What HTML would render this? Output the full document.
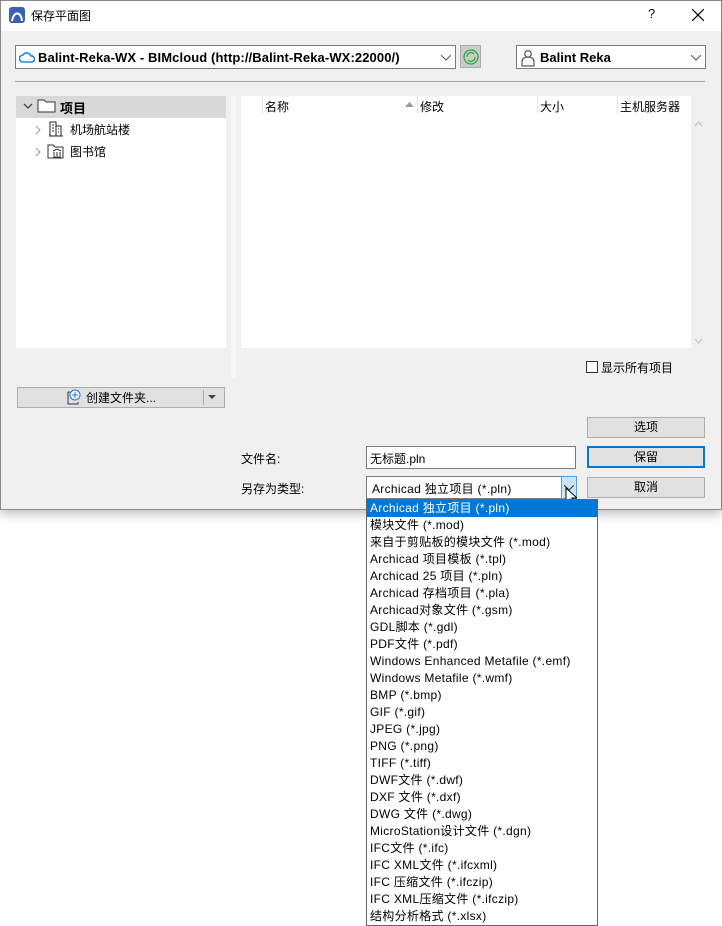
<!DOCTYPE html>
<html><head><meta charset="utf-8"><style>
*{box-sizing:border-box;margin:0;padding:0}
body{width:722px;height:926px;background:#fff;position:relative;overflow:hidden;font-family:"Liberation Sans","Microsoft YaHei","Noto Sans CJK SC",sans-serif;font-size:12px;color:#000}
.a{position:absolute}
#win{left:0;top:0;width:722px;height:510px;background:#f0f0f0;outline:1px solid #888;outline-offset:-1px;box-shadow:0 4px 10px rgba(0,0,0,.25)}
#title{left:1px;top:1px;width:720px;height:30px;background:#fff}
.btn{background:#e1e1e1;border:1px solid #adadad;text-align:center;line-height:18px;font-size:12px}
.combo{background:#fff;border:1px solid #7a7a7a}
#list{left:366px;top:499px;width:232px;height:427px;background:#fff;border:1px solid #646464}
#list div{height:17px;line-height:17px;padding-left:3px;font-size:12px;white-space:nowrap;letter-spacing:0.3px}
#list .s{background:#0078d7;color:#fff}
</style></head><body>
<div id="win" class="a">
<div id="title" class="a">
<svg class="a" style="left:8px;top:6px" width="16" height="16"><rect width="16" height="16" rx="3" fill="#3a62b0"/><path d="M3 14 C4 5 12 3 13 14" stroke="#fff" stroke-width="2" fill="none"/></svg>
<div class="a" style="left:30px;top:6px;font-size:12px">保存平面图</div>
<div class="a" style="left:647px;top:5px;font-size:13px">?</div>
<svg class="a" style="left:691px;top:8px" width="12" height="12"><path d="M0 0L12 12M12 0L0 12" stroke="#000" stroke-width="1.2"/></svg>
</div>
<div class="a combo" style="left:15px;top:45px;width:441px;height:24px">
<svg class="a" style="left:3px;top:4px" width="16" height="14"><path d="M4 12 H13 A3 3 0 0 0 12 6 A4.5 4.5 0 0 0 4 5 A3.5 3.5 0 0 0 4 12Z" fill="none" stroke="#1e88e5" stroke-width="1.6"/></svg>
<div class="a" style="left:22px;top:4px;font-weight:bold;font-size:13px;letter-spacing:0.1px">Balint-Reka-WX - BIMcloud (http://Balint-Reka-WX:22000/)</div>
<svg class="a" style="left:425px;top:9px" width="10" height="6"><path d="M0 0L5 5L10 0" stroke="#555" fill="none"/></svg>
</div>
<div class="a" style="left:460px;top:45px;width:21px;height:23px;background:#ccc;border:1px solid #aaa"><svg class="a" style="left:2px;top:3px" width="16" height="16"><circle cx="8" cy="8" r="7" fill="none" stroke="#2eaa3c" stroke-width="1.3"/><path d="M4 8A4 4 0 0 1 11 5M12 8A4 4 0 0 1 5 11" stroke="#2eaa3c" fill="none" stroke-width="1.3"/></svg></div>
<div class="a combo" style="left:516px;top:45px;width:190px;height:24px">
<svg class="a" style="left:4px;top:3px" width="14" height="18"><circle cx="7" cy="5" r="3.3" fill="none" stroke="#333"/><path d="M1 17V12A6 4 0 0 1 13 12V17Z" fill="none" stroke="#333"/></svg>
<div class="a" style="left:23px;top:4px;font-weight:bold;font-size:13px">Balint Reka</div>
<svg class="a" style="left:174px;top:9px" width="10" height="6"><path d="M0 0L5 5L10 0" stroke="#555" fill="none"/></svg>
</div>
<div class="a" style="left:15px;top:81px;width:690px;height:1px;background:#a0a0a0"></div>
<div class="a" style="left:16px;top:96px;width:210px;height:252px;background:#fff"></div>
<div class="a" style="left:16px;top:96px;width:210px;height:22px;background:#d9d9d9"></div>
<svg class="a" style="left:23px;top:103px" width="10" height="7"><path d="M1 1L5 5L9 1" stroke="#444" fill="none" stroke-width="1.3"/></svg>
<svg class="a" style="left:37px;top:98px" width="20" height="16"><path d="M1 2H7L9 4H18V14H1Z" fill="#fff" stroke="#333"/></svg>
<div class="a" style="left:60px;top:98px;font-size:13px;font-weight:bold">项目</div>
<svg class="a" style="left:35px;top:125px" width="6" height="10"><path d="M1 1L5 5L1 9" stroke="#999" fill="none"/></svg>
<svg class="a" style="left:48px;top:121px" width="16" height="16"><path d="M2 15V1H8V15M8 5H13V15M1 15H15M4 4H6M4 7H6M4 10H6M10 8H11M10 11H11" stroke="#222" fill="none"/></svg>
<div class="a" style="left:70px;top:121px">机场航站楼</div>
<svg class="a" style="left:35px;top:147px" width="6" height="10"><path d="M1 1L5 5L1 9" stroke="#999" fill="none"/></svg>
<svg class="a" style="left:47px;top:143px" width="18" height="16"><path d="M1 2H6L8 4H16V15H1Z" fill="#fff" stroke="#333"/><path d="M6 8L10 6L14 8M7 9V13M10 9V13M13 9V13M6 14H14" stroke="#333" fill="none"/></svg>
<div class="a" style="left:70px;top:143px">图书馆</div>
<div class="a" style="left:231px;top:96px;width:5px;height:282px;background:#f7f7f7"></div>
<div class="a" style="left:241px;top:96px;width:450px;height:252px;background:#fff"></div>
<div class="a" style="left:262px;top:96px;width:1px;height:18px;background:#e5e5e5"></div>
<div class="a" style="left:265px;top:98px">名称</div>
<svg class="a" style="left:405px;top:102px" width="9" height="6"><path d="M0 5L4.5 0L9 5Z" fill="#999"/></svg>
<div class="a" style="left:417px;top:96px;width:1px;height:18px;background:#e5e5e5"></div>
<div class="a" style="left:420px;top:98px">修改</div>
<div class="a" style="left:537px;top:96px;width:1px;height:18px;background:#e5e5e5"></div>
<div class="a" style="left:540px;top:98px">大小</div>
<div class="a" style="left:617px;top:96px;width:1px;height:18px;background:#e5e5e5"></div>
<div class="a" style="left:620px;top:98px">主机服务器</div>
<svg class="a" style="left:694px;top:121px" width="9" height="6"><path d="M1 5L4.5 1L8 5" stroke="#bbb" fill="none"/></svg>
<svg class="a" style="left:694px;top:338px" width="9" height="6"><path d="M1 1L4.5 5L8 1" stroke="#bbb" fill="none"/></svg>
<div class="a" style="left:586px;top:361px;width:12px;height:12px;background:#fff;border:1px solid #333"></div>
<div class="a" style="left:601px;top:359px">显示所有项目</div>
<div class="a btn" style="left:17px;top:387px;width:208px;height:21px"></div>
<svg class="a" style="left:66px;top:389px" width="16" height="16"><path d="M2 3H4M2 3V15H12V13" stroke="#333" fill="none"/><circle cx="9" cy="6" r="5" fill="#fff" stroke="#1e6fd9"/><path d="M9 3V9M6 6H12" stroke="#1e6fd9"/></svg>
<div class="a" style="left:86px;top:389px">创建文件夹...</div>
<div class="a" style="left:203px;top:390px;width:1px;height:15px;background:#aaa"></div>
<svg class="a" style="left:208px;top:395px" width="8" height="5"><path d="M0 0H8L4 4Z" fill="#444"/></svg>
<div class="a btn" style="left:587px;top:417px;width:118px;height:21px">选项</div>
<div class="a" style="left:241px;top:450px">文件名:</div>
<div class="a combo" style="left:366px;top:446px;width:210px;height:23px;border-color:#7a7a7a"><div class="a" style="left:3px;top:3px">无标题.pln</div></div>
<div class="a btn" style="left:587px;top:446px;width:118px;height:22px;border:2px solid #0078d7;line-height:18px">保留</div>
<div class="a" style="left:241px;top:480px">另存为类型:</div>
<div class="a combo" style="left:366px;top:476px;width:211px;height:23px"><div class="a" style="left:5px;top:3px;letter-spacing:0.3px">Archicad 独立项目 (*.pln)</div></div>
<div class="a" style="left:561px;top:476px;width:16px;height:23px;background:#cce4f7;border:1px solid #569de5"></div>
<svg class="a" style="left:564px;top:485px" width="10" height="6"><path d="M0 0L5 5L10 0" stroke="#333" fill="none"/></svg>
<svg class="a" style="left:565px;top:487px" width="12" height="20"><path d="M1 1V16L5 12L8 18L10 17L7 11H12Z" fill="#fff" stroke="#000"/></svg>
<div class="a btn" style="left:587px;top:477px;width:118px;height:21px">取消</div>
</div>
<div id="list" class="a">
<div class="s">Archicad 独立项目 (*.pln)</div>
<div>模块文件 (*.mod)</div>
<div>来自于剪贴板的模块文件 (*.mod)</div>
<div>Archicad 项目模板 (*.tpl)</div>
<div>Archicad 25 项目 (*.pln)</div>
<div>Archicad 存档项目 (*.pla)</div>
<div>Archicad对象文件 (*.gsm)</div>
<div>GDL脚本 (*.gdl)</div>
<div>PDF文件 (*.pdf)</div>
<div>Windows Enhanced Metafile (*.emf)</div>
<div>Windows Metafile (*.wmf)</div>
<div>BMP (*.bmp)</div>
<div>GIF (*.gif)</div>
<div>JPEG (*.jpg)</div>
<div>PNG (*.png)</div>
<div>TIFF (*.tiff)</div>
<div>DWF文件 (*.dwf)</div>
<div>DXF 文件 (*.dxf)</div>
<div>DWG 文件 (*.dwg)</div>
<div>MicroStation设计文件 (*.dgn)</div>
<div>IFC文件 (*.ifc)</div>
<div>IFC XML文件 (*.ifcxml)</div>
<div>IFC 压缩文件 (*.ifczip)</div>
<div>IFC XML压缩文件 (*.ifczip)</div>
<div>结构分析格式 (*.xlsx)</div>
</div>
</body></html>
